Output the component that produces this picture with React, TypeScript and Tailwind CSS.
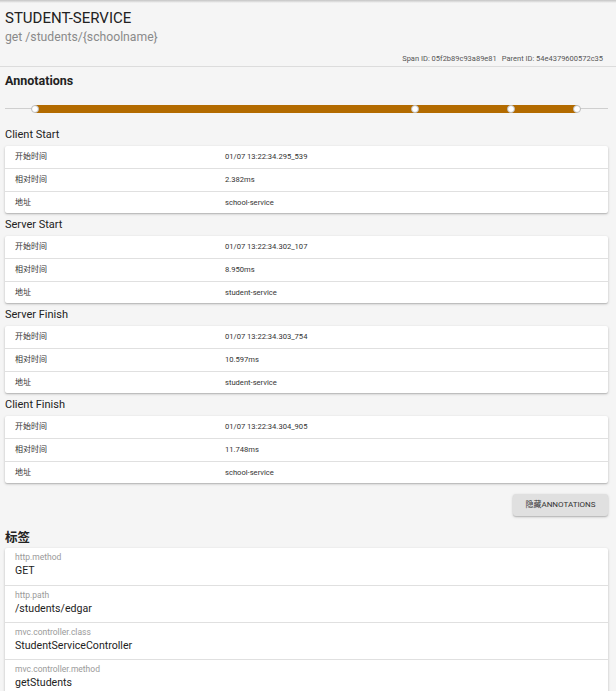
import React from "react";

const sections = [
  { title: "Client Start", rows: [["开始时间", "01/07 13:22:34.295_539"], ["相对时间", "2.382ms"], ["地址", "school-service"]] },
  { title: "Server Start", rows: [["开始时间", "01/07 13:22:34.302_107"], ["相对时间", "8.950ms"], ["地址", "student-service"]] },
  { title: "Server Finish", rows: [["开始时间", "01/07 13:22:34.303_754"], ["相对时间", "10.597ms"], ["地址", "student-service"]] },
  { title: "Client Finish", rows: [["开始时间", "01/07 13:22:34.304_905"], ["相对时间", "11.748ms"], ["地址", "school-service"]] },
];

const tags = [
  ["http.method", "GET"],
  ["http.path", "/students/edgar"],
  ["mvc.controller.class", "StudentServiceController"],
  ["mvc.controller.method", "getStudents"],
];

const dots = [30, 410, 506, 572];

export default function App() {
  return (
    <div className="min-h-screen bg-[#f5f5f5] text-[#333] font-['Roboto','Noto_Sans_CJK_SC',sans-serif]">
      <div className="h-[3px] bg-gradient-to-b from-[#c4c4c4] to-[#f5f5f5]" />
      <div className="pl-[5px] pr-[8px]">
        <div className="pt-[6px] text-[15px] leading-[19px] text-[#222]">STUDENT-SERVICE</div>
        <div className="text-[12.2px] leading-[18px] text-[#8a8a8a]">get /students/{"{schoolname}"}</div>
        <div className="mt-[7px] flex justify-end gap-[5px] pr-[5px] text-[7.5px] leading-[12px] text-[#555]">
          <span>Span ID: 05f2b89c93a89e81</span>
          <span>Parent ID: 54e4379600572c35</span>
        </div>
      </div>
      <div className="mt-[1px] border-t border-[#dcdcdc]" />
      <div className="pl-[5px] pr-[8px]">
        <div className="pt-[6px] text-[12.5px] font-bold leading-[16px] text-[#222]">Annotations</div>
        <div className="relative mt-[12px] h-[16px]">
          <div className="absolute left-0 right-0 top-[7px] h-px bg-[#cfcfcf]" />
          <div className="absolute left-[30px] top-[4px] h-[8px] w-[542px] bg-[#b36b00]" />
          {dots.map((d) => (
            <div
              key={d}
              className="absolute top-[4px] h-[8px] w-[8px] -translate-x-1/2 rounded-full border border-[#bbb] bg-white"
              style={{ left: d }}
            />
          ))}
        </div>
        <div className="mt-[6px]">
          {sections.map((s) => (
            <div key={s.title}>
              <div className="text-[11px] leading-[23px] text-[#222]">{s.title}</div>
              <div className="rounded-[2px] bg-white shadow-[0_1px_3px_rgba(0,0,0,0.2),0_1px_1px_rgba(0,0,0,0.12)]">
                {s.rows.map((r, i) => (
                  <div
                    key={r[0]}
                    className={`flex items-center pl-[10px] text-[8px] text-[#333] ${i === 0 ? "h-[22px]" : i === 1 ? "h-[23px] border-t border-[#e0e0e0]" : "h-[22px] border-t border-[#e0e0e0]"}`}
                  >
                    <span className="w-[210px]">{r[0]}</span>
                    <span className="text-[7.6px]">{r[1]}</span>
                  </div>
                ))}
              </div>
            </div>
          ))}
        </div>
        <div className="mt-[11px] flex justify-end">
          <button className="h-[22px] w-[95px] rounded-[3px] bg-[#e0e0e0] text-[8px] text-[#333] shadow-[0_1px_3px_rgba(0,0,0,0.2),0_1px_1px_rgba(0,0,0,0.12)]">
            隐藏ANNOTATIONS
          </button>
        </div>
        <div className="pt-[11px] text-[12.5px] font-bold leading-[21px] text-[#222]">标签</div>
        <div className="rounded-[2px] bg-white shadow-[0_1px_3px_rgba(0,0,0,0.2),0_1px_1px_rgba(0,0,0,0.12)]">
          {tags.map((t, i) => (
            <div key={t[0]} className={`h-[37px] pl-[10px] pt-[3px] ${i > 0 ? "border-t border-[#e0e0e0]" : ""}`}>
              <div className="text-[8.5px] leading-[12px] text-[#9a9a9a]">{t[0]}</div>
              <div className="text-[10.6px] leading-[16px] text-[#222]">{t[1]}</div>
            </div>
          ))}
        </div>
      </div>
    </div>
  );
}
